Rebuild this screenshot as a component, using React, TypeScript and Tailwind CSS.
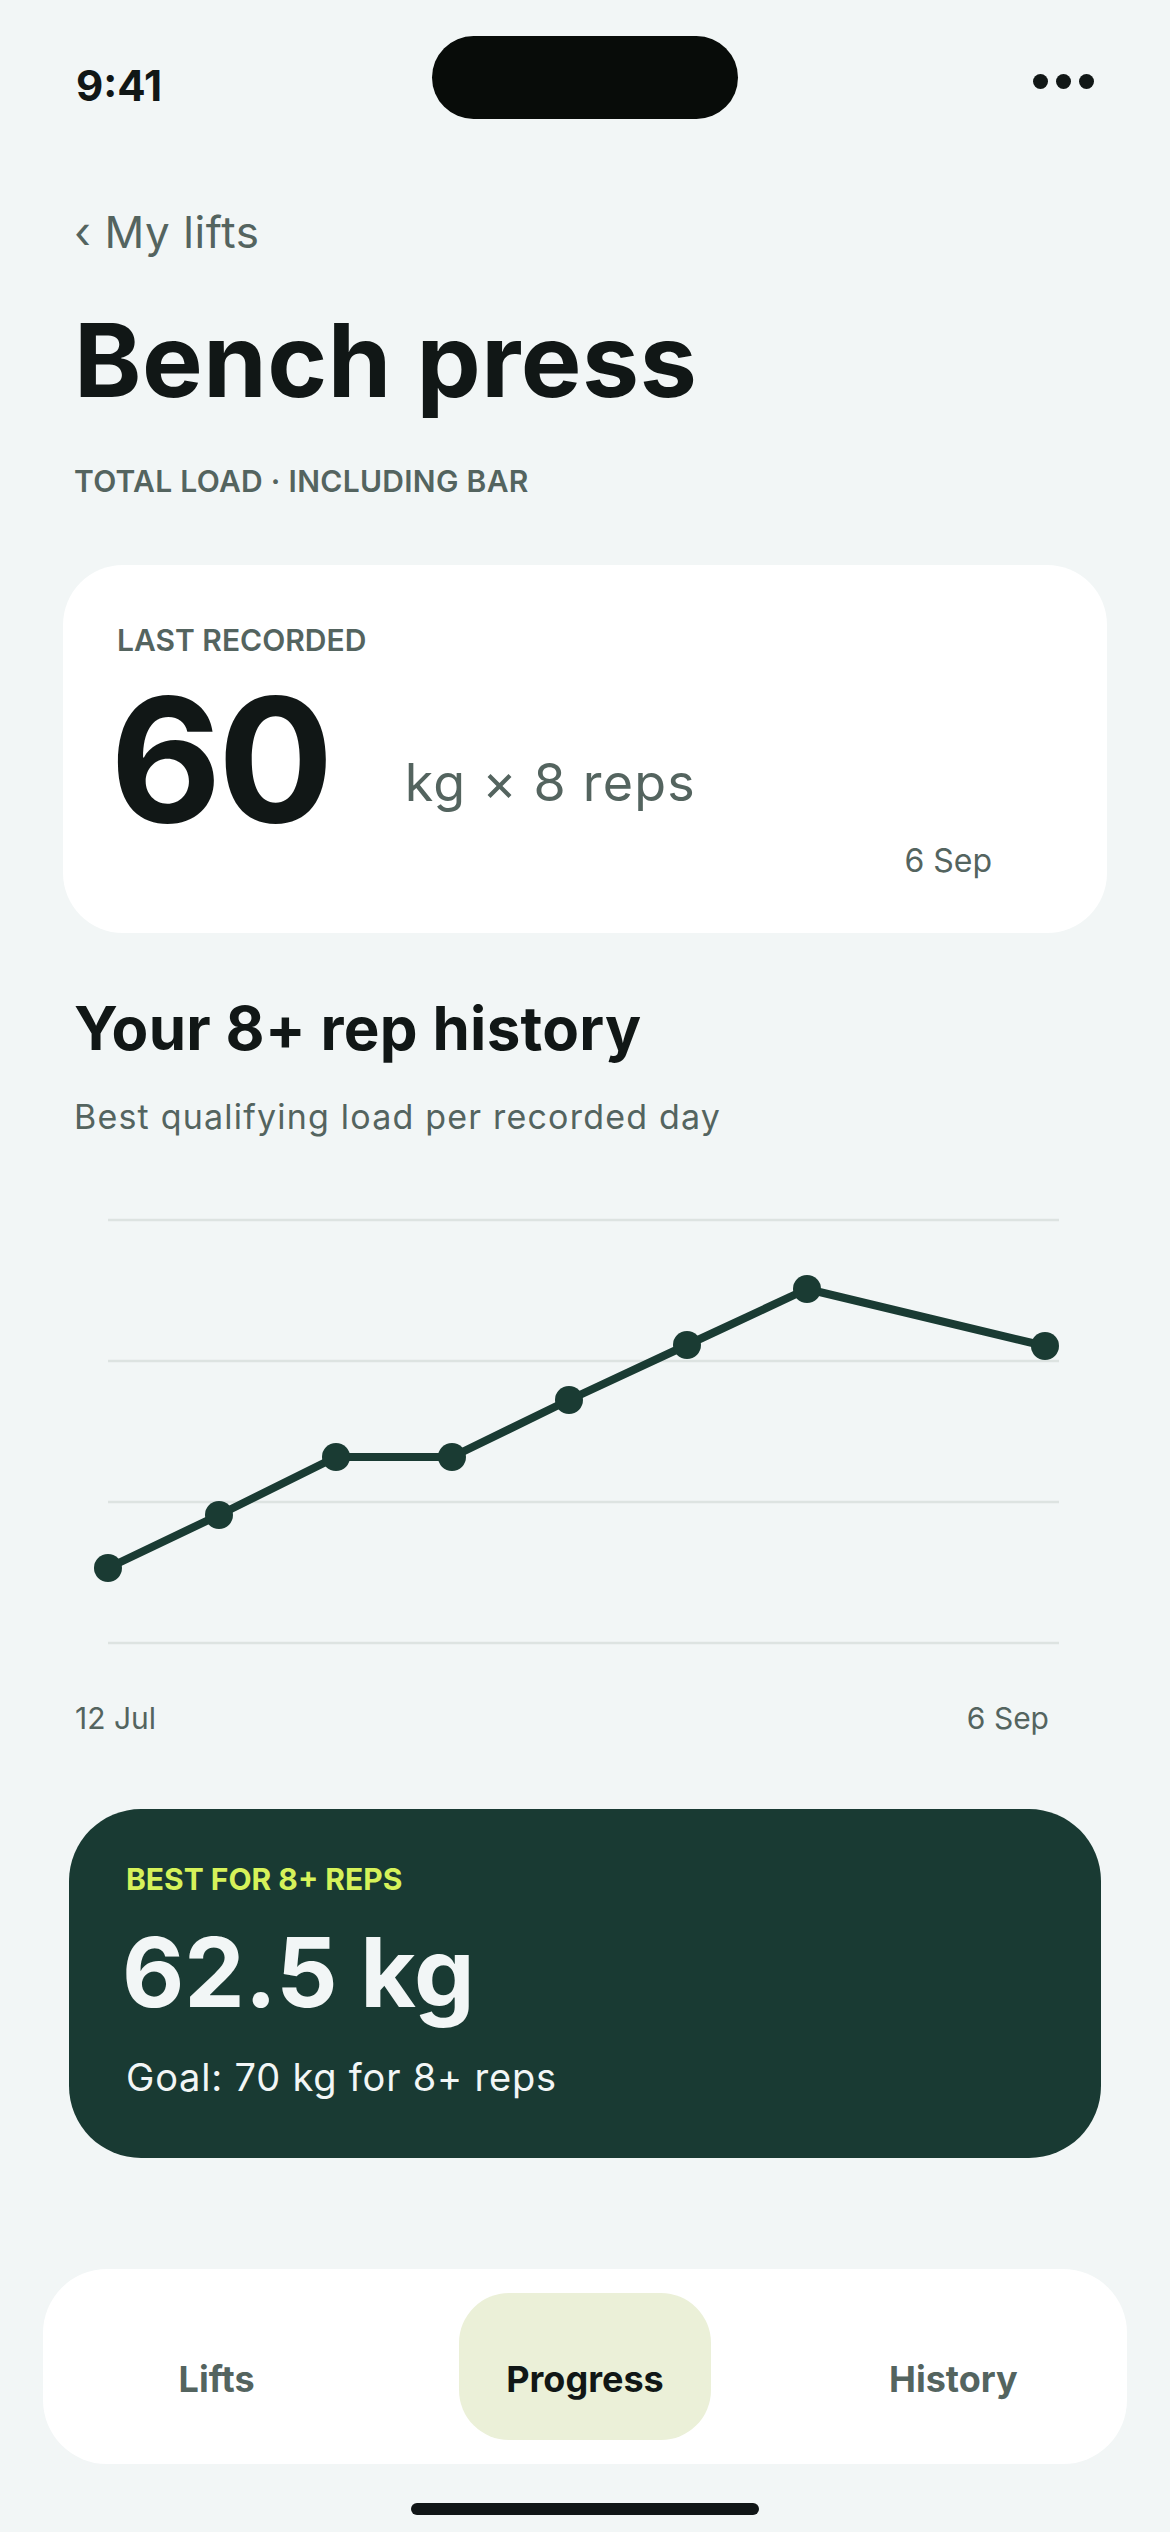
const points = [
  [18, 368],
  [129, 315],
  [246, 257],
  [362, 257],
  [479, 200],
  [597, 145],
  [717, 89],
  [955, 146],
];

const gridLines = [20, 161, 302, 443];

function HistoryChart() {
  const path = points.map(([x, y], i) => `${i === 0 ? 'M' : 'L'}${x} ${y}`).join(' ');
  return (
    <svg width="980" height="460" viewBox="0 0 980 460" className="block ml-[90px] mt-[66px]">
      {gridLines.map((y) => (
        <line key={y} x1="18" x2="969" y1={y} y2={y} stroke="#dde3e1" strokeWidth="2.5" />
      ))}
      <path d={path} fill="none" stroke="#1a3b33" strokeWidth="8" strokeLinejoin="round" strokeLinecap="round" />
      {points.map(([x, y]) => (
        <circle key={`${x}-${y}`} cx={x} cy={y} r="14" fill="#1a3b33" />
      ))}
    </svg>
  );
}

export default function App() {
  return (
    <div className="w-[1170px] min-h-[2532px] bg-[#f2f6f6] font-['Inter',sans-serif] text-[#111716] flex flex-col">

      {/* STATUS BAR */}
      <div className="grid grid-cols-[1fr_306px_1fr] items-start px-[76px] pt-[36px]">
        <span className="mt-[29px] text-[42px] font-bold leading-none">9:41</span>
        <div className="h-[83px] rounded-full bg-[#080c09]" />
        <div className="mt-[38px] flex justify-end gap-[8px]">
          <span className="w-[15px] h-[15px] rounded-full bg-[#111716]" />
          <span className="w-[15px] h-[15px] rounded-full bg-[#111716]" />
          <span className="w-[15px] h-[15px] rounded-full bg-[#111716]" />
        </div>
      </div>

      {/* HEADER */}
      <div className="px-[74px]">
        <div className="mt-[91px] text-[44px] leading-none tracking-[0.6px] text-[#54645f]">‹ My lifts</div>
        <h1 className="mt-[55px] text-[102px] font-bold leading-none tracking-[0.5px]">Bench press</h1>
        <p className="mt-[55px] text-[30px] font-semibold leading-none tracking-[0.3px] text-[#54645f]">TOTAL LOAD · INCLUDING BAR</p>
      </div>

      {/* LAST RECORDED */}
      <div className="mx-[63px] mt-[69px] bg-white rounded-[60px] pl-[54px] pt-[60px] pb-[56px]">
        <p className="text-[30px] font-semibold leading-none text-[#54645f]">LAST RECORDED</p>
        <div className="flex items-start mt-[18px]">
          <span className="-ml-[7px] text-[172px] font-bold leading-none tracking-[-4px]">60</span>
          <span className="ml-[75px] mt-[84px] text-[52px] leading-none tracking-[1.2px] text-[#54645f]">kg × 8 reps</span>
        </div>
        <div className="flex justify-end pr-[115px]">
          <span className="text-[32px] leading-none text-[#54645f]">6 Sep</span>
        </div>
      </div>

      {/* HISTORY */}
      <div className="px-[74px]">
        <h2 className="mt-[65px] text-[60px] font-bold leading-none tracking-[0.3px]">Your 8+ rep history</h2>
        <p className="mt-[42px] text-[34px] leading-none tracking-[1.2px] text-[#54645f]">Best qualifying load per recorded day</p>
      </div>

      <HistoryChart />

      <div className="flex justify-between pl-[75px] pr-[121px] mt-[43px] text-[30px] leading-none text-[#54645f]">
        <span>12 Jul</span>
        <span>6 Sep</span>
      </div>

      {/* BEST */}
      <div className="mx-[69px] mt-[76px] bg-[#193a33] rounded-[72px] pl-[57px] pt-[55px] pb-[62px]">
        <p className="text-[30px] font-bold leading-none text-[#d6f25a]">BEST FOR 8+ REPS</p>
        <p className="-ml-[4px] mt-[30px] text-[96px] font-bold leading-none text-[#f2f6f6]">62.5 kg</p>
        <p className="mt-[38px] text-[38px] leading-none tracking-[0.8px] text-[#f2f6f6]">Goal: 70 kg for 8+ reps</p>
      </div>

      {/* NAV */}
      <div className="mx-[43px] mt-[111px] bg-white rounded-[64px] py-[24px] px-[48px] grid grid-cols-3 gap-[117px]">
        <div className="h-[147px] pt-[68px] text-center text-[36px] font-bold leading-none text-[#54645f]">Lifts</div>
        <div className="h-[147px] pt-[68px] text-center text-[36px] font-bold leading-none rounded-[50px] bg-[#ebf0d8]">Progress</div>
        <div className="h-[147px] pt-[68px] text-center text-[36px] font-bold leading-none text-[#54645f]">History</div>
      </div>

      <div className="mx-auto mt-[39px] w-[348px] h-[12px] rounded-full bg-[#101516]" />
    </div>
  );
}
